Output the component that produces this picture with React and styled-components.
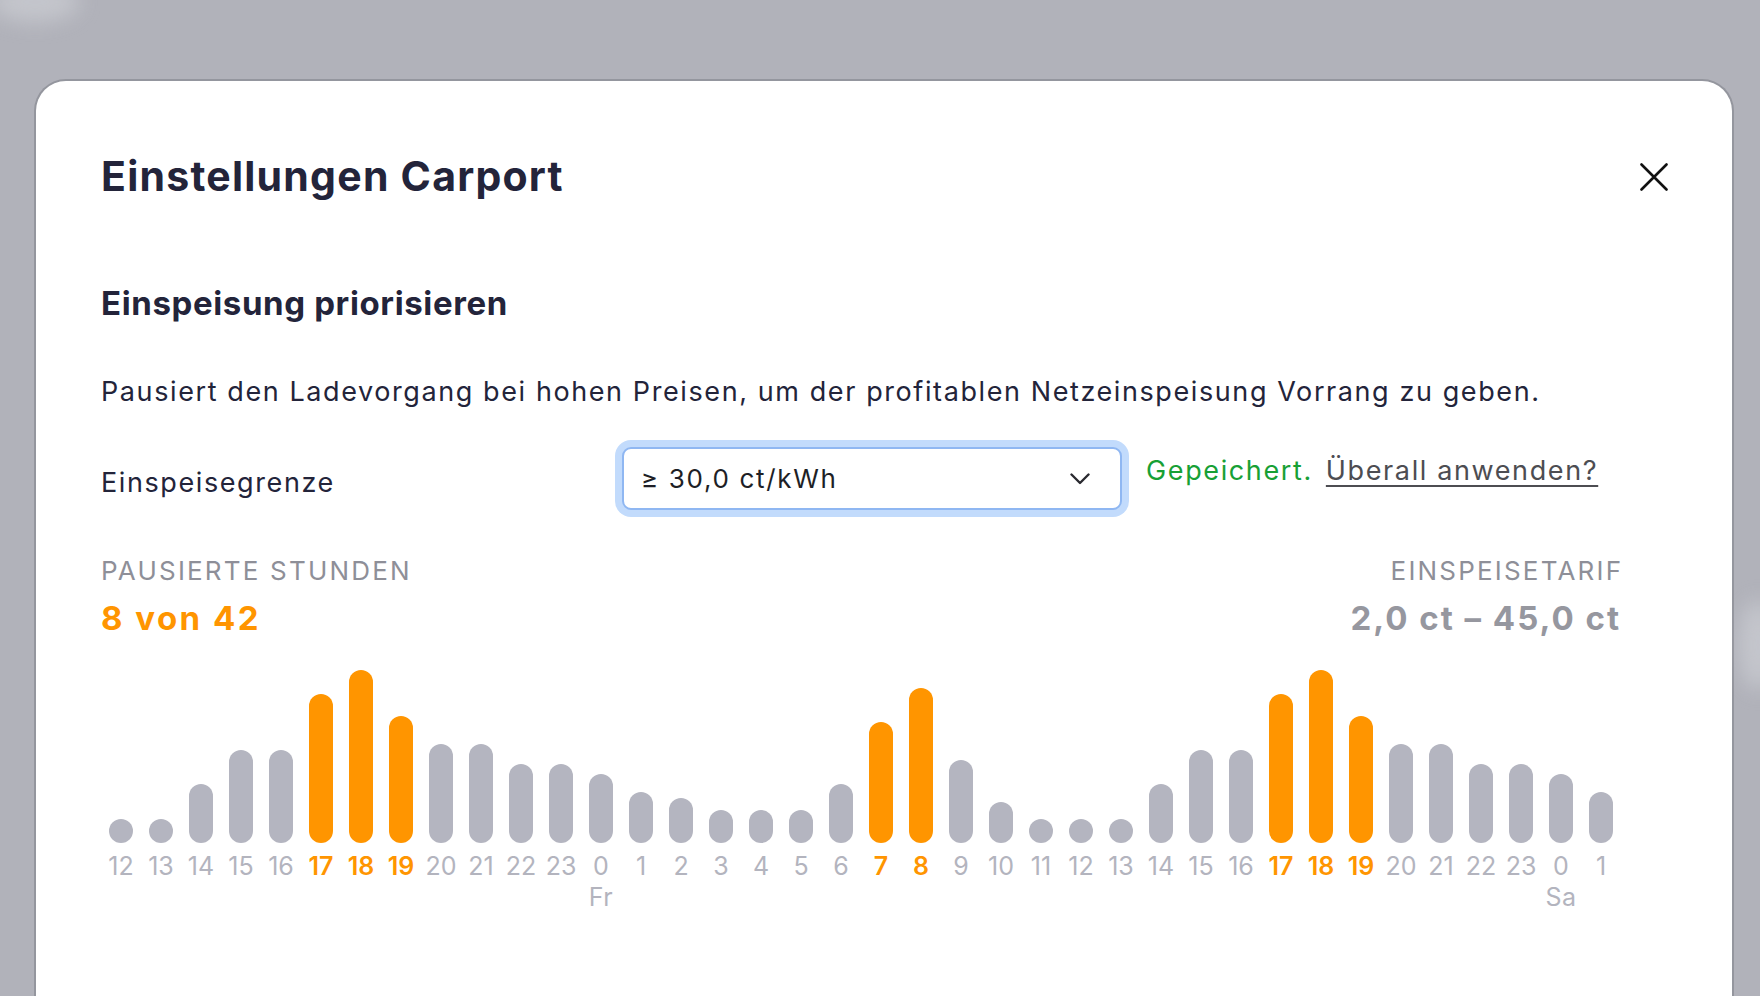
import React from "react";
import styled, { createGlobalStyle } from "styled-components";

const GlobalStyle = createGlobalStyle`
  html, body {
    margin: 0;
    padding: 0;
    background: #b1b2ba;
    overflow: hidden;
  }
  body {
    font-family: Inter, "Noto Sans", sans-serif;
  }
  * { box-sizing: border-box; }
`;

const Page = styled.div`
  position: relative;
  height: 996px;
  padding-top: 81px;
  overflow: hidden;
`;

const Smudge = styled.div`
  position: absolute;
  top: ${(p) => p.$top}px;
  left: ${(p) => p.$left}px;
  width: ${(p) => p.$w}px;
  height: ${(p) => p.$h}px;
  border-radius: 50%;
  background: rgba(220, 221, 226, 0.45);
  filter: blur(10px);
`;

const Modal = styled.section`
  position: relative;
  margin-left: 36px;
  width: 1696px;
  min-height: 960px;
  background: #ffffff;
  border-radius: 30px 30px 0 0;
  box-shadow: 0 0 0 2px rgba(120, 121, 130, 0.5);
  padding: 75px 64px 0 65px;
  color: #23243a;
`;

const Header = styled.header`
  display: flex;
  align-items: center;
  justify-content: space-between;
  height: 41px;
`;

const Title = styled.h1`
  margin: 0;
  font-size: 41px;
  line-height: 1;
  font-weight: 700;
  letter-spacing: 0.03em;
  color: #23243a;
`;

const CloseButton = styled.button`
  width: 28px;
  height: 28px;
  padding: 0;
  border: none;
  background: none;
  display: flex;
  align-items: center;
  justify-content: center;
  cursor: pointer;
`;

const Section = styled.div`
  width: 1520px;
`;

const Heading = styled.h2`
  margin: 90px 0 0;
  font-size: 33px;
  line-height: 1;
  font-weight: 700;
  letter-spacing: 0.019em;
  color: #23243a;
`;

const Description = styled.p`
  margin: 58px 0 0;
  font-size: 27px;
  line-height: 1;
  font-weight: 400;
  letter-spacing: 0.059em;
  color: #23243a;
`;

const ThresholdRow = styled.div`
  margin-top: 42px;
  display: flex;
  align-items: flex-start;
`;

const FieldLabel = styled.label`
  flex: 0 0 521px;
  margin-top: 22px;
  font-size: 27px;
  line-height: 1;
  letter-spacing: 0.059em;
  color: #23243a;
`;

const SelectBox = styled.div`
  flex: 0 0 500px;
  height: 63px;
  border: 2px solid #8fb7f2;
  border-radius: 9px;
  box-shadow: 0 0 0 7px #c2dbfc;
  background: #fff;
  padding: 0 30px 0 17px;
  display: flex;
  align-items: center;
  justify-content: space-between;
`;

const SelectValue = styled.span`
  font-size: 26px;
  line-height: 1;
  letter-spacing: 0.064em;
  color: #1e1f26;
`;

const Status = styled.div`
  margin: 10px 0 0 24px;
  display: flex;
  align-items: baseline;
  font-size: 27px;
  line-height: 1;
  letter-spacing: 0.06em;
`;

const Saved = styled.span`
  color: #17a035;
`;

const ApplyLink = styled.a`
  margin-left: 13px;
  color: #4d4d52;
  text-decoration: underline;
  text-underline-offset: 5px;
  text-decoration-thickness: 2px;
  cursor: pointer;
`;

const StatsRow = styled.div`
  margin-top: 48px;
  display: flex;
  justify-content: space-between;
`;

const StatBlock = styled.div`
  display: flex;
  flex-direction: column;
  align-items: ${(p) => (p.$right ? "flex-end" : "flex-start")};
`;

const StatLabel = styled.span`
  font-size: 26px;
  line-height: 1;
  letter-spacing: 0.084em;
  text-transform: uppercase;
  color: #8e8f98;
  margin-right: ${(p) => (p.$right ? "-0.084em" : "0")};
`;

const StatValue = styled.span`
  margin-top: 18px;
  font-size: 33px;
  line-height: 1;
  font-weight: 700;
  letter-spacing: ${(p) => p.$ls};
  color: ${(p) => p.$color};
`;

const Chart = styled.div`
  margin-top: 28px;
  display: flex;
`;

const Slot = styled.div`
  flex: 0 0 40px;
  display: flex;
  flex-direction: column;
  align-items: center;
`;

const BarArea = styled.div`
  height: 180px;
  width: 100%;
  display: flex;
  align-items: flex-end;
  justify-content: center;
`;

const Bar = styled.div`
  width: 24px;
  border-radius: 12px;
  background: ${(p) => (p.$hi ? "#ff9500" : "#b4b5c0")};
`;

const HourLabel = styled.span`
  margin-top: 11px;
  font-size: 25px;
  line-height: 1;
  letter-spacing: 0;
  white-space: nowrap;
  font-weight: ${(p) => (p.$hi ? 600 : 400)};
  color: ${(p) => (p.$hi ? "#ff9500" : "#b3b4be")};
`;

const DayLabel = styled.span`
  margin-top: 6px;
  font-size: 25px;
  line-height: 1;
  letter-spacing: 0.02em;
  color: #b3b4be;
`;

const hours = [
  [12, 24], [13, 24], [14, 59], [15, 93], [16, 93], [17, 149, 1], [18, 173, 1], [19, 127, 1],
  [20, 99], [21, 99], [22, 79], [23, 79], [0, 69, 0, "Fr"], [1, 51], [2, 45], [3, 33],
  [4, 33], [5, 33], [6, 59], [7, 121, 1], [8, 155, 1], [9, 83], [10, 41], [11, 24],
  [12, 24], [13, 24], [14, 59], [15, 93], [16, 93], [17, 149, 1], [18, 173, 1], [19, 127, 1],
  [20, 99], [21, 99], [22, 79], [23, 79], [0, 69, 0, "Sa"], [1, 51],
];

function CloseIcon() {
  return (
    <svg width="28" height="28" viewBox="0 0 28 28" fill="none">
      <path d="M1.5 1.5 L26.5 26.5 M26.5 1.5 L1.5 26.5" stroke="#111" strokeWidth="2.6" strokeLinecap="round" />
    </svg>
  );
}

function Chevron() {
  return (
    <svg width="20" height="12" viewBox="0 0 20 12" fill="none">
      <path d="M1.5 1.5 L10 10 L18.5 1.5" stroke="#2a2a30" strokeWidth="2.4" strokeLinecap="round" strokeLinejoin="round" />
    </svg>
  );
}

export default function App() {
  return (
    <>
      <GlobalStyle />
      <Page>
        <Smudge $top={-18} $left={-10} $w={90} $h={40} />
        <Smudge $top={600} $left={1738} $w={40} $h={90} />
        <Modal>
          <Header>
            <Title>Einstellungen Carport</Title>
            <CloseButton aria-label="Schließen">
              <CloseIcon />
            </CloseButton>
          </Header>
          <Section>
            <Heading>Einspeisung priorisieren</Heading>
            <Description>
              Pausiert den Ladevorgang bei hohen Preisen, um der profitablen Netzeinspeisung Vorrang zu geben.
            </Description>
            <ThresholdRow>
              <FieldLabel>Einspeisegrenze</FieldLabel>
              <SelectBox>
                <SelectValue>≥ 30,0 ct/kWh</SelectValue>
                <Chevron />
              </SelectBox>
              <Status>
                <Saved>Gepeichert.</Saved>
                <ApplyLink>Überall anwenden?</ApplyLink>
              </Status>
            </ThresholdRow>
            <StatsRow>
              <StatBlock>
                <StatLabel>Pausierte Stunden</StatLabel>
                <StatValue $color="#ff9500" $ls="0.075em">8 von 42</StatValue>
              </StatBlock>
              <StatBlock $right>
                <StatLabel $right>Einspeisetarif</StatLabel>
                <StatValue $color="#96979f" $ls="0.06em">2,0 ct – 45,0 ct</StatValue>
              </StatBlock>
            </StatsRow>
            <Chart>
              {hours.map(([hour, h, hi, day], i) => (
                <Slot key={i}>
                  <BarArea>
                    <Bar $hi={!!hi} style={{ height: h }} />
                  </BarArea>
                  <HourLabel $hi={!!hi}>{hour}</HourLabel>
                  {day && <DayLabel>{day}</DayLabel>}
                </Slot>
              ))}
            </Chart>
          </Section>
        </Modal>
      </Page>
    </>
  );
}
